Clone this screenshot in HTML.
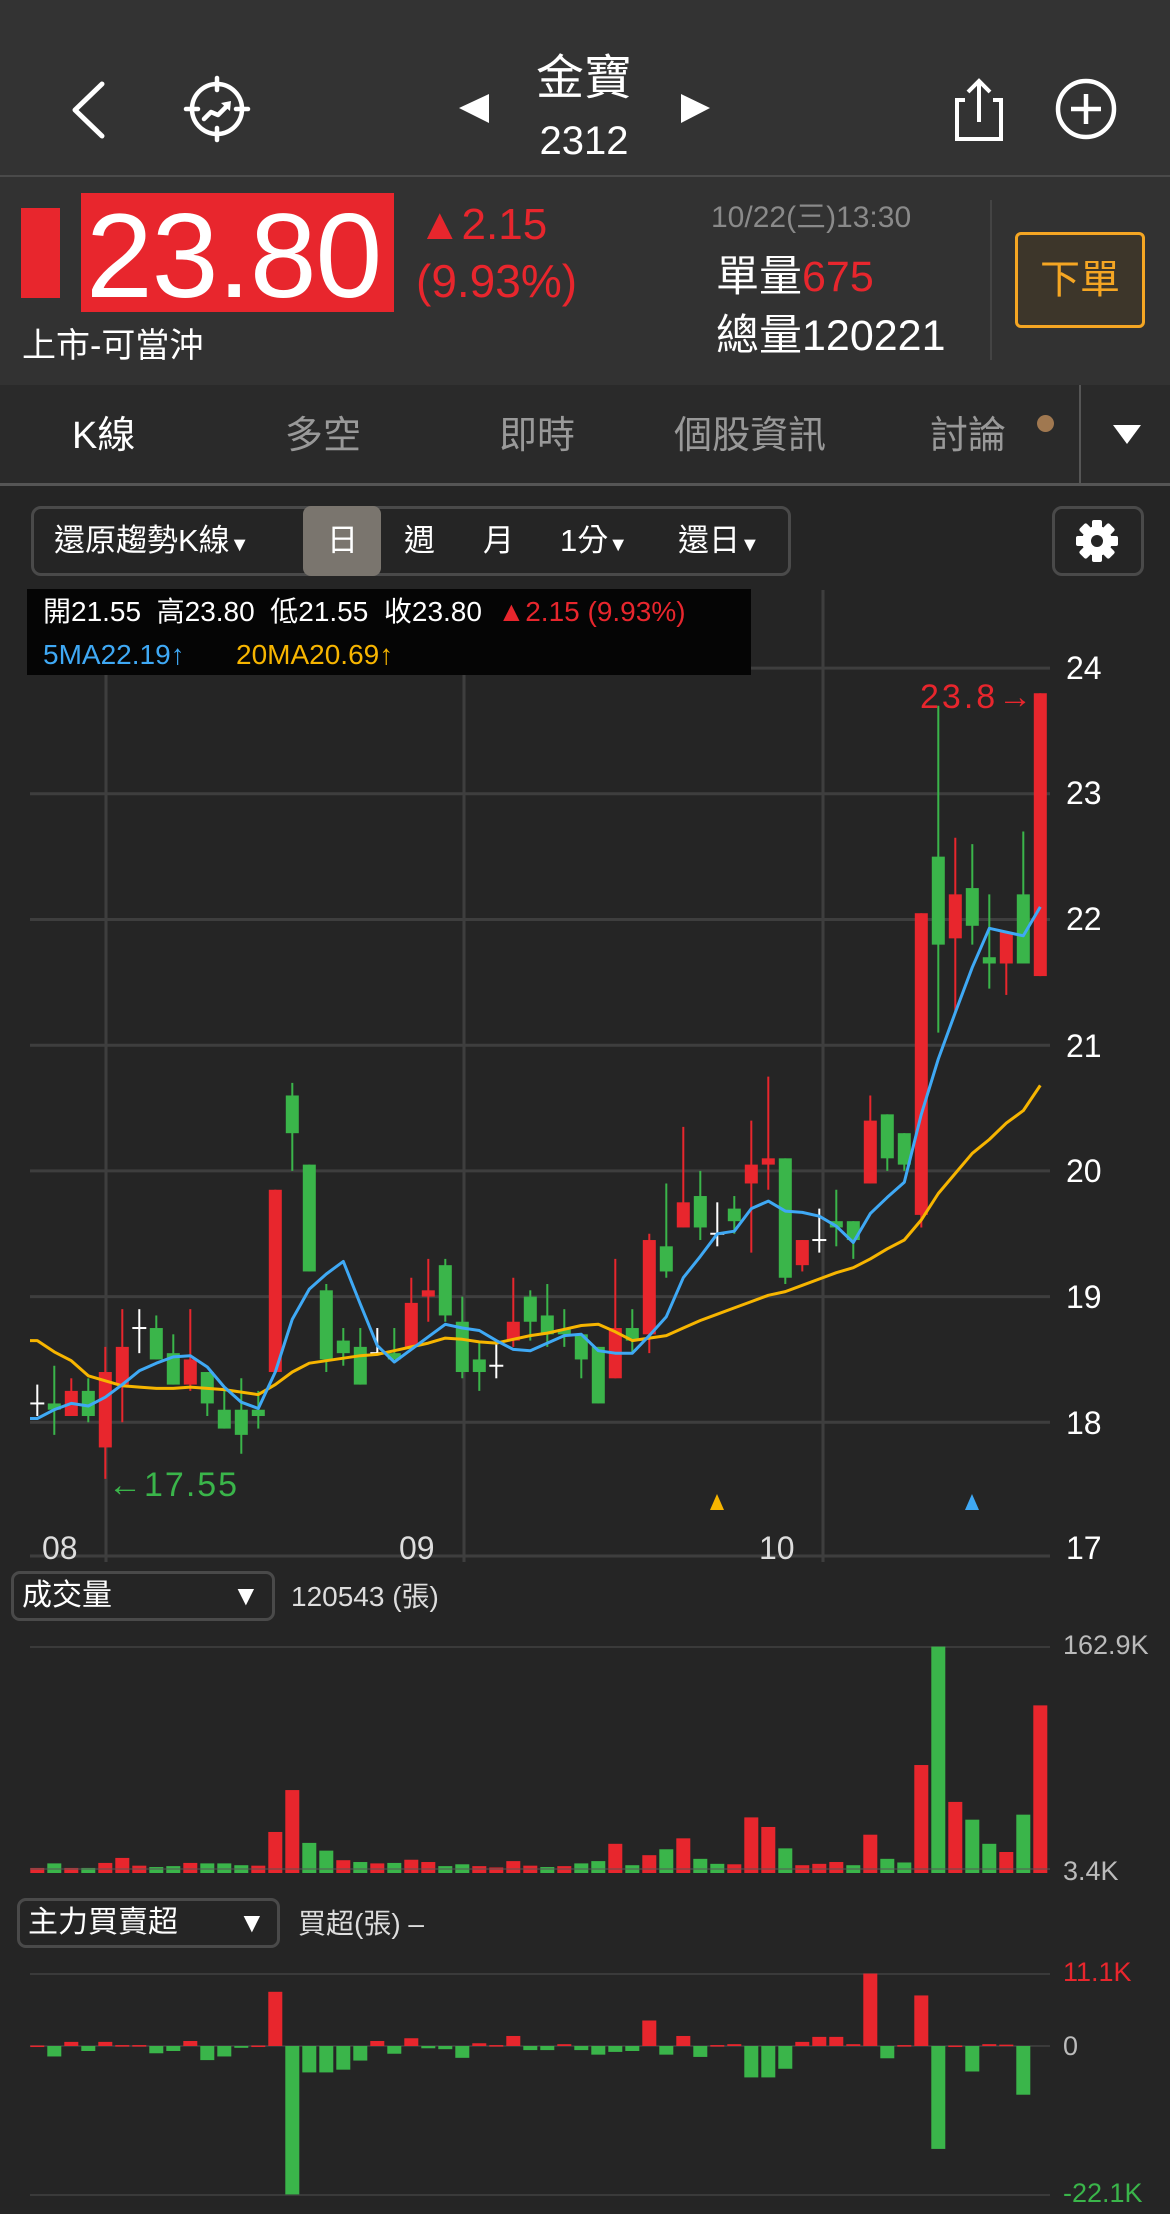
<!DOCTYPE html>
<html><head><meta charset="utf-8">
<style>
*{margin:0;padding:0;box-sizing:border-box}
body{width:1170px;height:2214px;background:#252525;position:relative;overflow:hidden;font-family:"Liberation Sans","Noto Sans CJK TC",sans-serif;color:#fff}
.a{position:absolute;white-space:nowrap;line-height:1}
</style></head><body>
<div class="a" style="left:0;top:0;width:1170px;height:175px;background:#333"></div>
<div class="a" style="left:0;top:175px;width:1170px;height:2px;background:#4a4a4a"></div>
<div class="a" style="left:0;top:177px;width:1170px;height:208px;background:#323232"></div>
<div class="a" style="left:0;top:385px;width:1170px;height:98px;background:#2a2a2a"></div>
<div class="a" style="left:0;top:483px;width:1170px;height:3px;background:#555"></div>
<div class="a" style="left:1079px;top:385px;width:2px;height:98px;background:#555"></div>

<svg class="a" style="left:0;top:0" width="1170" height="180">
<polyline points="102,84 75,110 102,136" fill="none" stroke="#fff" stroke-width="5" stroke-linecap="round" stroke-linejoin="round"/>
<circle cx="217" cy="109" r="25" fill="none" stroke="#fff" stroke-width="4.5"/>
<g stroke="#fff" stroke-width="4.5" stroke-linecap="round"><line x1="217" y1="78" x2="217" y2="90"/><line x1="217" y1="128" x2="217" y2="140"/><line x1="186" y1="109" x2="198" y2="109"/><line x1="236" y1="109" x2="248" y2="109"/></g>
<polyline points="204,119 211,112 218,115 228,105" fill="none" stroke="#fff" stroke-width="4.5" stroke-linecap="round" stroke-linejoin="round"/>
<polygon points="231,101 221,103 230,111" fill="#fff"/>
<polygon points="489,94 459,108 489,123" fill="#fff"/>
<polygon points="681,94 710,108 681,123" fill="#fff"/>
<path d="M965,100 H957 V139 H1001 V100 H993" fill="none" stroke="#fff" stroke-width="4"/>
<line x1="979" y1="82" x2="979" y2="122" stroke="#fff" stroke-width="4"/>
<polyline points="968,92 979,81 990,92" fill="none" stroke="#fff" stroke-width="4"/>
<circle cx="1086" cy="109" r="28" fill="none" stroke="#fff" stroke-width="4.5"/>
<line x1="1086" y1="94" x2="1086" y2="124" stroke="#fff" stroke-width="4.5"/><line x1="1071" y1="109" x2="1101" y2="109" stroke="#fff" stroke-width="4.5"/>
</svg>
<div class="a" style="left:484px;top:55px;width:200px;text-align:center;font-size:48px">金寶</div>
<div class="a" style="left:484px;top:121px;width:200px;text-align:center;font-size:40px">2312</div>

<div class="a" style="left:21px;top:208px;width:39px;height:90px;background:#e8262d"></div>
<div class="a" style="left:81px;top:193px;width:313px;height:119px;background:#e8262d"></div>
<div class="a" style="left:86px;top:196px;font-size:120px;letter-spacing:-1px">23.80</div>
<div class="a" style="left:418px;top:203px;font-size:44px;color:#e8262d">▲2.15</div>
<div class="a" style="left:416px;top:258px;font-size:46px;color:#e8262d">(9.93%)</div>
<div class="a" style="left:22px;top:329px;font-size:34px">上市-可當沖</div>
<div class="a" style="left:711px;top:203px;font-size:30px;color:#8a8a8a">10/22(三)13:30</div>
<div class="a" style="left:716px;top:256px;font-size:43px">單量<span style="color:#e8262d">675</span></div>
<div class="a" style="left:716px;top:315px;font-size:43px">總量120221</div>
<div class="a" style="left:990px;top:200px;width:2px;height:160px;background:#444"></div>
<div class="a" style="left:1015px;top:232px;width:130px;height:96px;border:3px solid #f5a623;border-radius:6px;background:#3d362a;color:#f5a623;font-size:40px;text-align:center;line-height:90px">下單</div>

<div class="a" style="left:72px;top:417px;font-size:38px">K線</div>
<div class="a" style="left:285px;top:417px;font-size:38px;color:#999">多空</div>
<div class="a" style="left:499px;top:417px;font-size:38px;color:#999">即時</div>
<div class="a" style="left:674px;top:417px;font-size:38px;color:#999">個股資訊</div>
<div class="a" style="left:930px;top:417px;font-size:38px;color:#999">討論</div>
<div class="a" style="left:1037px;top:415px;width:17px;height:17px;border-radius:50%;background:#a07850"></div>
<svg class="a" style="left:1113px;top:425px" width="28" height="20"><polygon points="0,0 28,0 14,19" fill="#fff"/></svg>

<div class="a" style="left:31px;top:506px;width:760px;height:70px;border:3px solid #4a4a4a;border-radius:10px"></div>
<div class="a" style="left:303px;top:506px;width:78px;height:70px;background:#7a756e;border-radius:8px"></div>
<div class="a" style="left:54px;top:525px;font-size:31px">還原趨勢K線<span style="font-size:20px">▼</span></div>
<div class="a" style="left:327px;top:525px;font-size:31px">日</div>
<div class="a" style="left:404px;top:525px;font-size:31px">週</div>
<div class="a" style="left:483px;top:525px;font-size:31px">月</div>
<div class="a" style="left:560px;top:525px;font-size:31px">1分<span style="font-size:20px">▼</span></div>
<div class="a" style="left:678px;top:525px;font-size:31px">還日<span style="font-size:20px">▼</span></div>
<div class="a" style="left:1052px;top:506px;width:92px;height:70px;border:3px solid #4a4a4a;border-radius:10px"></div>
<svg class="a" style="left:1075px;top:519px" width="44" height="44" viewBox="-22 -22 44 44">
<g fill="#fff"><circle r="15"/><g id="t"><rect x="-5" y="-21" width="10" height="10" rx="2"/></g>
<use href="#t" transform="rotate(45)"/><use href="#t" transform="rotate(90)"/><use href="#t" transform="rotate(135)"/><use href="#t" transform="rotate(180)"/><use href="#t" transform="rotate(225)"/><use href="#t" transform="rotate(270)"/><use href="#t" transform="rotate(315)"/></g>
<circle r="6" fill="#252525"/></svg>

<svg id="ch" class="a" style="left:0;top:0" width="1170" height="2214"></svg>

<div class="a" style="left:27px;top:589px;width:724px;height:86px;background:#050505"></div>
<div class="a" style="left:43px;top:598px;font-size:28px">開21.55&nbsp; 高23.80&nbsp; 低21.55&nbsp; 收23.80 &nbsp;<span style="color:#e8262d">▲2.15 (9.93%)</span></div>
<div class="a" style="left:43px;top:641px;font-size:28px;color:#3fa9f5">5MA22.19↑</div>
<div class="a" style="left:236px;top:641px;font-size:28px;color:#f7b500">20MA20.69↑</div>

<div class="a" style="left:920px;top:680px;font-size:34px;color:#e8262d;letter-spacing:3px">23.8→</div>
<div class="a" style="left:108px;top:1468px;font-size:34px;color:#3ab54a;letter-spacing:2px">←17.55</div>

<div class="a" style="left:1066px;top:652px;font-size:32px">24</div>
<div class="a" style="left:1066px;top:777px;font-size:32px">23</div>
<div class="a" style="left:1066px;top:903px;font-size:32px">22</div>
<div class="a" style="left:1066px;top:1030px;font-size:32px">21</div>
<div class="a" style="left:1066px;top:1155px;font-size:32px">20</div>
<div class="a" style="left:1066px;top:1281px;font-size:32px">19</div>
<div class="a" style="left:1066px;top:1407px;font-size:32px">18</div>
<div class="a" style="left:1066px;top:1532px;font-size:32px">17</div>
<div class="a" style="left:42px;top:1532px;font-size:32px;color:#ddd">08</div>
<div class="a" style="left:399px;top:1532px;font-size:32px;color:#ddd">09</div>
<div class="a" style="left:759px;top:1532px;font-size:32px;color:#ddd">10</div>

<div class="a" style="left:11px;top:1571px;width:264px;height:50px;border:3px solid #4a4a4a;border-radius:9px"></div>
<div class="a" style="left:22px;top:1581px;font-size:30px">成交量</div>
<div class="a" style="left:232px;top:1582px;font-size:28px">▼</div>
<div class="a" style="left:291px;top:1583px;font-size:28px;color:#ddd">120543 (張)</div>
<div class="a" style="left:1063px;top:1632px;font-size:27px;color:#bbb">162.9K</div>
<div class="a" style="left:1063px;top:1858px;font-size:27px;color:#bbb">3.4K</div>

<div class="a" style="left:17px;top:1898px;width:263px;height:50px;border:3px solid #4a4a4a;border-radius:9px"></div>
<div class="a" style="left:28px;top:1908px;font-size:30px">主力買賣超</div>
<div class="a" style="left:238px;top:1909px;font-size:28px">▼</div>
<div class="a" style="left:298px;top:1910px;font-size:28px;color:#ddd">買超(張) –</div>
<div class="a" style="left:1063px;top:1959px;font-size:27px;color:#e8262d">11.1K</div>
<div class="a" style="left:1063px;top:2033px;font-size:27px;color:#bbb">0</div>
<div class="a" style="left:1063px;top:2180px;font-size:27px;color:#3ab54a">-22.1K</div>

<script>
var R='#e8262d',G='#3ab54a',W='#ffffff',B='#3fa9f5',Y='#f7b500';
var s='';
function py(p){return 1548-(p-17)*125.7}
function cx(i){return 37.3+17*i}
for(var p=18;p<=24;p++){s+='<line x1="30" x2="1050" y1="'+py(p)+'" y2="'+py(p)+'" stroke="#3e3e3e" stroke-width="3"/>';}
s+='<line x1="30" x2="1050" y1="1556" y2="1556" stroke="#3e3e3e" stroke-width="3"/>';
[106,464,823].forEach(function(x){s+='<line x1="'+x+'" x2="'+x+'" y1="590" y2="1562" stroke="#3e3e3e" stroke-width="3"/>';});
s+='<line x1="30" x2="1050" y1="1647" y2="1647" stroke="#3a3a3a" stroke-width="2"/>';
s+='<line x1="30" x2="1050" y1="1974" y2="1974" stroke="#3a3a3a" stroke-width="2"/>';
s+='<line x1="30" x2="1050" y1="2046" y2="2046" stroke="#3a3a3a" stroke-width="2"/>';
s+='<line x1="30" x2="1050" y1="2195" y2="2195" stroke="#3a3a3a" stroke-width="2"/>';
var c=[[18.15,18.15,18.3,18.05],[18.15,18.1,18.45,17.9],[18.05,18.25,18.35,18.05],[18.25,18.05,18.35,18.0],[17.8,18.4,18.6,17.55],[18.3,18.6,18.9,18.0],[18.75,18.75,18.9,18.55],[18.75,18.5,18.85,18.5],[18.55,18.3,18.7,18.3],[18.3,18.5,18.9,18.25],
[18.4,18.15,18.4,18.05],[18.1,17.95,18.25,17.95],[18.1,17.9,18.35,17.75],[18.1,18.05,18.25,17.95],[18.4,19.85,19.85,18.4],[20.6,20.3,20.7,20.0],[20.05,19.2,20.05,19.2],[19.05,18.5,19.1,18.4],[18.65,18.55,18.75,18.45],[18.6,18.3,18.75,18.3],
[18.55,18.55,18.75,18.55],[18.55,18.5,18.75,18.5],[18.6,18.95,19.15,18.6],[19.0,19.05,19.3,18.8],[19.25,18.85,19.3,18.8],[18.8,18.4,19.0,18.35],[18.5,18.4,18.65,18.25],[18.45,18.45,18.65,18.35],[18.65,18.8,19.15,18.6],[19.0,18.8,19.05,18.65],
[18.85,18.7,19.1,18.6],[18.74,18.7,18.9,18.6],[18.7,18.5,18.7,18.35],[18.6,18.15,18.6,18.15],[18.35,18.75,19.3,18.35],[18.75,18.65,18.9,18.55],[18.7,19.45,19.5,18.55],[19.4,19.2,19.9,19.15],[19.55,19.75,20.35,19.55],[19.8,19.55,20.0,19.45],
[19.5,19.5,19.75,19.4],[19.7,19.6,19.8,19.5],[19.9,20.05,20.4,19.35],[20.05,20.1,20.75,19.85],[20.1,19.15,20.1,19.1],[19.25,19.45,19.45,19.2],[19.45,19.45,19.7,19.35],[19.6,19.55,19.85,19.4],[19.6,19.45,19.6,19.3],[19.9,20.4,20.6,19.9],
[20.45,20.1,20.45,20.0],[20.3,20.05,20.3,20.0],[19.65,22.05,22.05,19.55],[22.5,21.8,23.7,21.1],[21.85,22.2,22.65,21.25],[22.25,21.95,22.6,21.8],[21.7,21.65,22.2,21.45],[21.65,21.9,21.9,21.4],[22.2,21.65,22.7,21.65],[21.55,23.8,23.8,21.55]];
c.forEach(function(d,i){var o=d[0],cl=d[1],h=d[2],l=d[3];var col=cl>o?R:(cl<o?G:W);var x=cx(i);
 s+='<line x1="'+x+'" x2="'+x+'" y1="'+py(h)+'" y2="'+py(l)+'" stroke="'+col+'" stroke-width="2"/>';
 var t=py(Math.max(o,cl)),b=py(Math.min(o,cl));
 if(col==W){s+='<line x1="'+(x-7)+'" x2="'+(x+7)+'" y1="'+t+'" y2="'+t+'" stroke="#fff" stroke-width="2"/>';}
 else s+='<rect x="'+(x-6.5)+'" y="'+t+'" width="13" height="'+Math.max(b-t,3)+'" fill="'+col+'"/>';});
var m5=[18.03,18.1,18.15,18.13,18.2,18.3,18.41,18.47,18.52,18.53,18.44,18.28,18.16,18.11,18.4,18.82,19.06,19.18,19.28,18.94,18.61,18.48,18.58,18.68,18.78,18.75,18.73,18.65,18.58,18.57,
18.63,18.69,18.7,18.57,18.55,18.55,18.69,18.84,19.15,19.32,19.5,19.52,19.7,19.76,19.68,19.67,19.64,19.56,19.43,19.66,19.79,19.91,20.45,20.89,21.26,21.62,21.93,21.9,21.87,22.1];
var m20=[18.65,18.56,18.49,18.37,18.33,18.29,18.28,18.27,18.27,18.28,18.27,18.26,18.24,18.22,18.3,18.4,18.47,18.49,18.51,18.53,18.54,18.57,18.6,18.63,18.67,18.66,18.64,18.63,18.66,18.69,
18.71,18.74,18.77,18.78,18.72,18.65,18.67,18.69,18.75,18.81,18.86,18.91,18.96,19.01,19.04,19.09,19.14,19.19,19.23,19.3,19.38,19.45,19.61,19.82,19.98,20.14,20.25,20.38,20.48,20.68];
function pl(a,col,x0){var p=(x0!==undefined?x0+','+py(a[0])+' ':'');a.forEach(function(v,i){p+=cx(i).toFixed(1)+','+py(v).toFixed(1)+' ';});return '<polyline points="'+p+'" fill="none" stroke="'+col+'" stroke-width="3" stroke-linejoin="round"/>';}
s+=pl(m20,Y,30);s+=pl(m5,B,30);
s+='<polygon points="717,1494 710,1510 724,1510" fill="'+Y+'"/><polygon points="972,1494 965,1510 979,1510" fill="'+B+'"/>';
var v='r808 g798 r808 g808 r797 r786 r803 g806 g804 r797 g798 g798 g802 r803 r729 r637 g753 g770 r791 g795 r798 g797 r790 r795 g804 g800 r804 r807 r793 r803 g806 r804 g798 g793 r755 g802 r780 g767 r743 g788 g799 r800 r697 r718 g765 r802 r799 r795 g802 r735 g788 g796 r582 g322 r663 g702 g755 r773 g691 r451'.split(' ');
v.forEach(function(t,i){var y=1500+(+t.slice(1))/2.196;s+='<rect x="'+(cx(i)-7)+'" y="'+y+'" width="14" height="'+(1873-y)+'" fill="'+(t[0]=='r'?R:G)+'"/>';});
s+='<line x1="30" x2="1050" y1="1869" y2="1869" stroke="#555" stroke-width="1"/>';
var f='r1198 g1222 r1190 g1210 r1190 r1197 r1197 g1215 g1210 r1188 g1230 g1222 g1203 r1198 r1080 g1525 g1257 g1257 g1251 g1231 r1188 g1216 r1182 g1204 g1206 g1225 r1193 r1197 r1177 g1208 g1208 r1195 g1208 g1218 g1212 g1210 r1143 g1218 r1177 g1223 r1197 r1195 g1268 g1268 g1249 r1190 r1179 r1179 r1195 r1040 g1226 r1197 r1088 g1425 r1198 g1255 r1195 r1196 g1306'.split(' ');
f.forEach(function(t,i){var y=1500+(+t.slice(1))/2.196,z=2046;var a=Math.min(y,z),b=Math.max(y,z);s+='<rect x="'+(cx(i)-7)+'" y="'+a+'" width="14" height="'+Math.max(b-a,1.5)+'" fill="'+(t[0]=='r'?R:G)+'"/>';});
document.getElementById('ch').innerHTML=s;
</script>
</body></html>
